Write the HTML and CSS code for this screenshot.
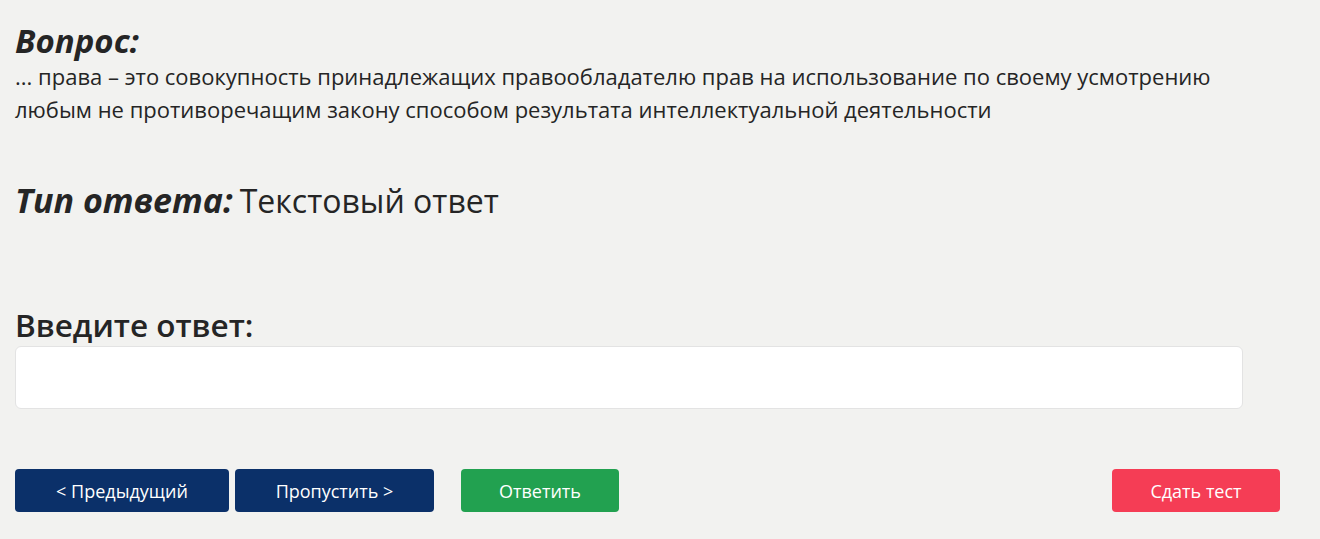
FILE: index.html
```html
<html>
  <head>
    <title>Тест</title>
    <link rel="stylesheet" href="styles.css">
  </head>
  <body>
    <div class="page">
      <div class="question-block">
        <h2 class="label-italic">Вопрос:</h2>
        <p class="question-text">... права – это совокупность принадлежащих правообладателю прав на использование по своему усмотрению любым не противоречащим закону способом результата интеллектуальной деятельности</p>
      </div>
      <div class="type-block">
        <span class="label-italic type-label">Тип ответа:</span>
        <span class="type-value">Текстовый ответ</span>
      </div>
      <div class="answer-block">
        <label class="answer-label" for="answer">Введите ответ:</label>
        <input id="answer" class="answer-input" type="text">
      </div>
      <div class="button-row">
        <button class="btn btn-navy btn-prev">&lt; Предыдущий</button>
        <button class="btn btn-navy btn-skip">Пропустить &gt;</button>
        <button class="btn btn-green">Ответить</button>
        <button class="btn btn-red">Сдать тест</button>
      </div>
    </div>
  </body>
</html>
```

FILE: styles.css
```css
* {
  box-sizing: border-box;
}
html {
  background-color: #f2f2f0;
}
body {
  margin: 0;
  font-family: "Open Sans", "Noto Sans", sans-serif;
  color: #252525;
}
.page {
  padding: 22px 40px 0 15px;
  display: flex;
  flex-direction: column;
}
.label-italic {
  font-size: 33px;
  font-weight: 700;
  font-style: italic;
  margin: 0;
  line-height: 38px;
}
.question-text {
  font-size: 22px;
  line-height: 33px;
  margin: 0;
  max-width: 1230px;
}
.type-block {
  margin-top: 55px;
  display: flex;
  align-items: baseline;
  gap: 7px;
}
.type-label {
  font-size: 34px;
}
.type-value {
  font-size: 32px;
  line-height: 38px;
}
.answer-block {
  margin-top: 86px;
  display: flex;
  flex-direction: column;
}
.answer-label {
  font-size: 31.5px;
  font-weight: 600;
  line-height: 38px;
}
.answer-input {
  margin-top: 2px;
  width: 1228px;
  height: 63px;
  border: 1px solid #e3e3e3;
  border-radius: 6px;
  background: #fff;
  font-size: 20px;
  padding: 0 12px;
}
.button-row {
  margin-top: 60px;
  display: flex;
  align-items: center;
}
.btn {
  height: 43px;
  border: none;
  border-radius: 4px;
  color: #fff;
  font-family: "Open Sans", "Noto Sans", sans-serif;
  font-size: 18px;
  cursor: pointer;
}
.btn-navy {
  background-color: #0b3069;
}
.btn-prev {
  width: 214px;
}
.btn-skip {
  width: 199px;
  margin-left: 6px;
}
.btn-green {
  background-color: #22a150;
  width: 158px;
  margin-left: 27px;
}
.btn-red {
  background-color: #f53d55;
  width: 168px;
  margin-left: auto;
}
```
